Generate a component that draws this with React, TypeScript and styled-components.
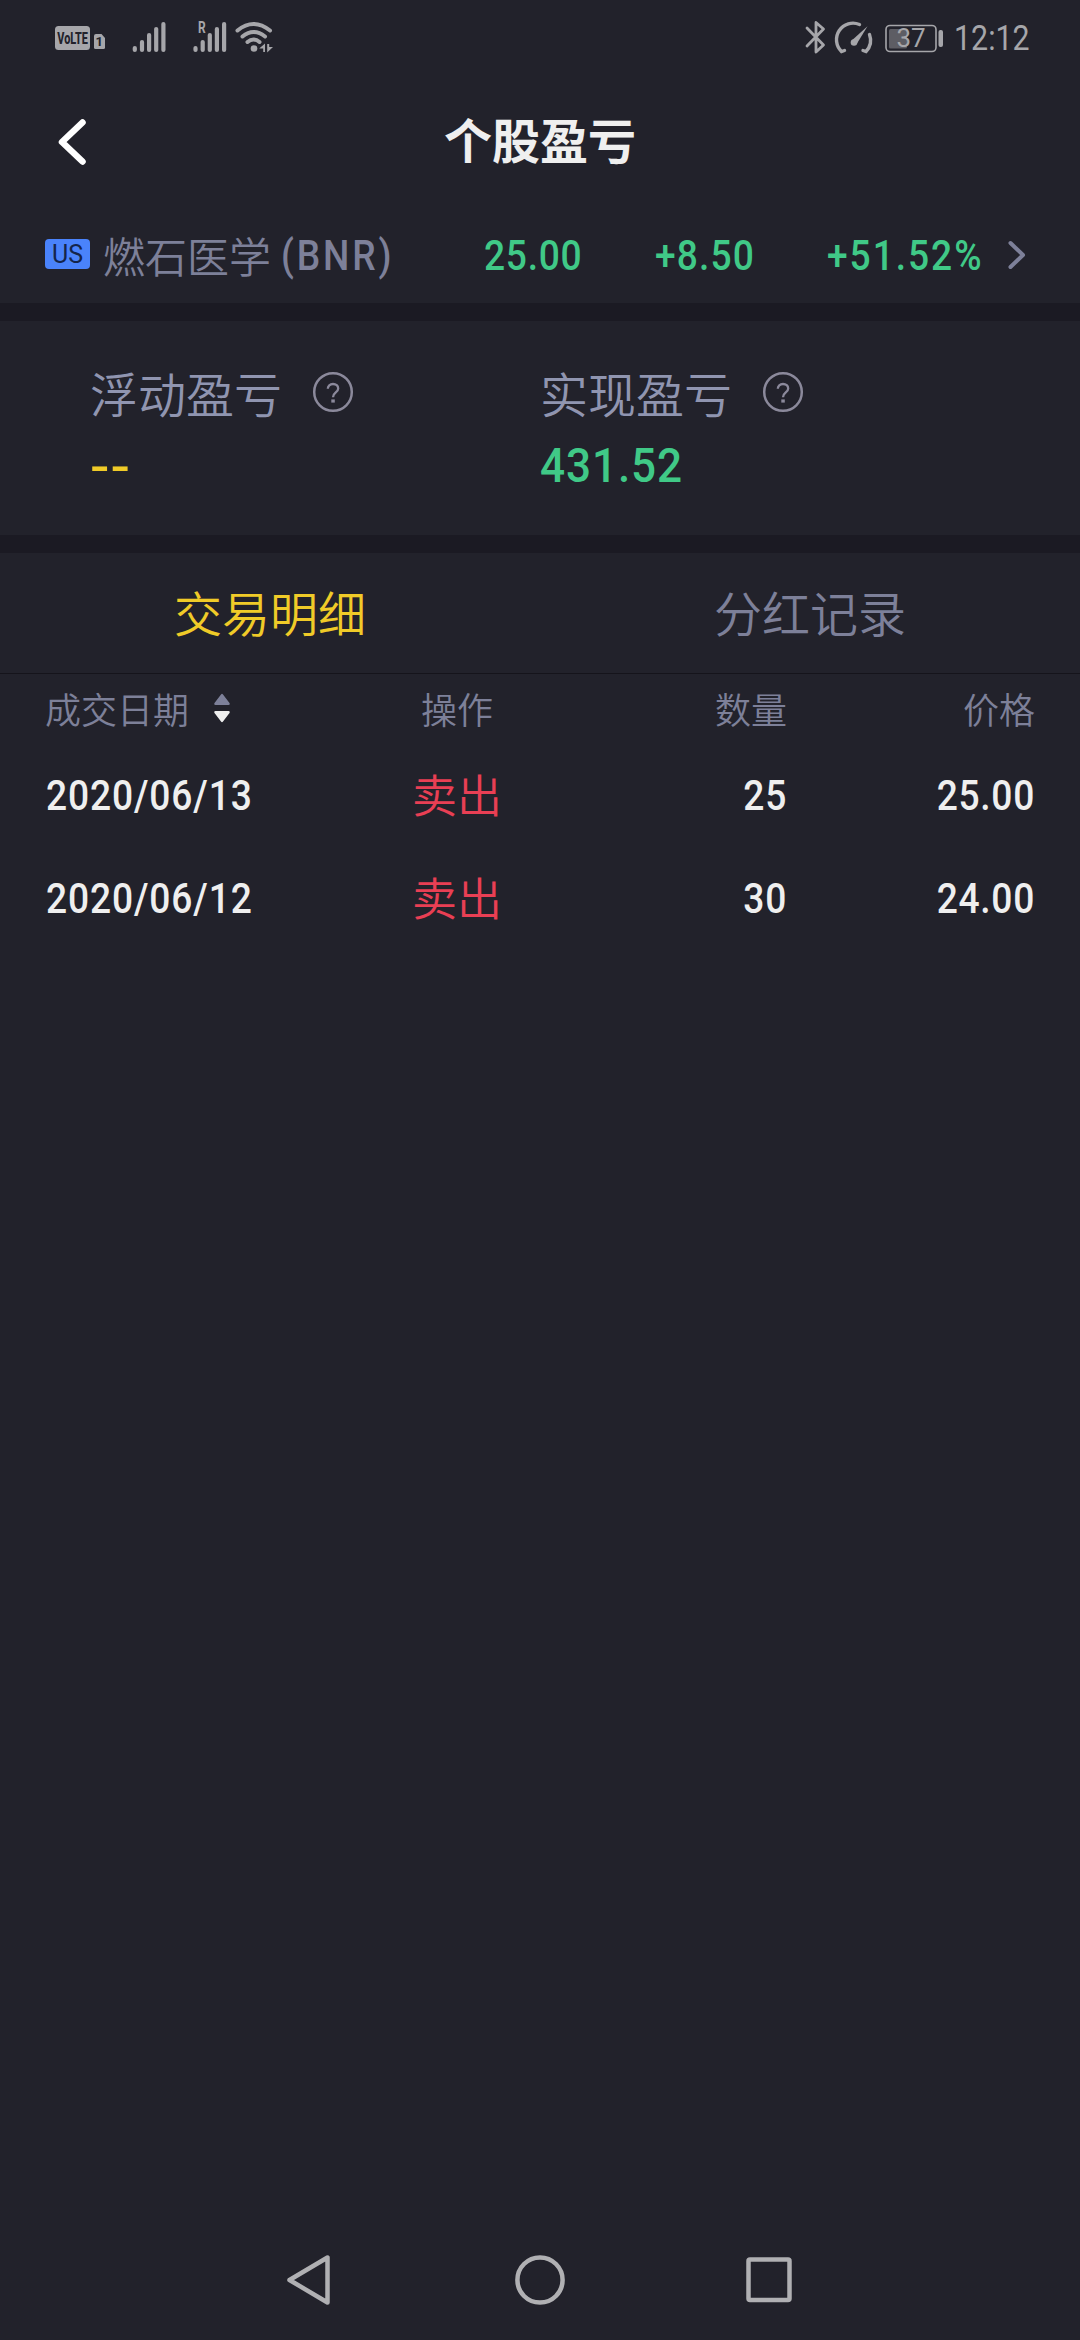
import React from "react";
import styled, { createGlobalStyle } from "styled-components";

const GlobalStyle = createGlobalStyle`
  * { box-sizing: border-box; }
  body { margin: 0; background: #22222b; }
`;

const color = {
  bg: "#22222b",
  band: "#1b1a23",
  muted: "#7d8099",
  label: "#9095b0",
  light: "#efefef",
  green: "#40c987",
  yellow: "#f0cb28",
  red: "#e93f54",
  status: "#a6a6aa",
};

const cjk = `"Noto Sans CJK SC", sans-serif`;

const Screen = styled.div`
  width: 1080px;
  height: 2340px;
  display: flex;
  flex-direction: column;
  background: ${color.bg};
  color: ${color.light};
  font-family: Roboto, ${cjk};
  overflow: hidden;
`;

const Band = styled.div`
  height: 18px;
  background: ${color.band};
`;

const StatusBar = styled.header`
  height: 76px;
  padding: 16px 51px 0 54px;
  display: flex;
  justify-content: space-between;
  align-items: flex-start;
  color: ${color.status};
`;

const StatusSide = styled.div`
  display: flex;
  height: 44px;
`;

const Clock = styled.time`
  width: 75px;
  margin-left: 10px;
  font-size: 34.5px;
  line-height: 44px;
  white-space: nowrap;
  transform: scaleX(0.88);
  transform-origin: left center;
`;

const TitleBar = styled.div`
  height: 131px;
  padding: 0 54px;
  display: grid;
  grid-template-columns: 40px 1fr 40px;
  align-items: center;
`;

const Title = styled.h1`
  margin: 0;
  padding-top: 3px;
  font-size: 48px;
  line-height: 56px;
  font-weight: 700;
  text-align: center;
`;

const Figure = styled.span<{
  $size?: number;
  $color?: string;
  $end?: boolean;
  $stretch?: number;
  $spacing?: number;
  $drop?: number;
}>`
  display: block;
  padding-top: ${(p) => p.$drop ?? 2}px;
  font-size: ${(p) => p.$size ?? 42}px;
  line-height: 1.2;
  font-weight: 500;
  letter-spacing: ${(p) => p.$spacing ?? 0.8}px;
  color: ${(p) => p.$color ?? color.light};
  text-align: ${(p) => (p.$end ? "right" : "left")};
  white-space: nowrap;
  transform: scaleX(${(p) => p.$stretch ?? 0.885});
  transform-origin: ${(p) => (p.$end ? "right" : "left")} center;
`;

const TradeDate = styled(Figure)`
  padding-left: 1px;
`;

const Quote = styled.section`
  height: 96px;
  padding: 0 45px;
  display: grid;
  grid-template-columns: 439px 171px 172px 180px 1fr;
  align-items: center;
`;

const Stock = styled.div`
  display: flex;
  align-items: center;
  color: ${color.muted};
`;

const Market = styled.span`
  width: 45px;
  height: 30px;
  margin: -2px 13px 0 0;
  border-radius: 4px;
  background: #4a83fb;
  color: #14254b;
  font-size: 25px;
  line-height: 31px;
  text-align: center;
`;

const StockName = styled.span`
  width: 178px;
  font-family: ${cjk};
  font-size: 42px;
  line-height: 52px;
  font-weight: 350;
  white-space: nowrap;
`;

const Summary = styled.section`
  height: 214px;
  padding: 45px 90px 0;
  display: grid;
  grid-template-columns: 450px 450px;
`;

const SummaryLabel = styled.div`
  height: 56px;
  padding-bottom: 4px;
  margin-bottom: 13px;
  display: flex;
  align-items: center;
  gap: 30px;
  font-family: ${cjk};
  font-size: 48px;
  line-height: 56px;
  font-weight: 350;
  color: ${color.label};
`;

const Tabs = styled.nav`
  height: 121px;
  display: grid;
  grid-template-columns: 1fr 1fr;
  border-bottom: 1px solid #15141b;
`;

const Tab = styled.div<{ $active?: boolean }>`
  font-family: ${cjk};
  font-size: 48px;
  line-height: 117px;
  font-weight: 350;
  text-align: center;
  color: ${(p) => (p.$active ? color.yellow : color.muted)};
`;

const Row = styled.div<{ $head?: boolean }>`
  height: ${(p) => (p.$head ? 70 : 103)}px;
  padding: 0 45px;
  display: grid;
  grid-template-columns: 322px 180px 240px 248px;
  align-items: center;
`;

const HeadCell = styled.div<{ $align?: string }>`
  padding-bottom: 3px;
  display: flex;
  align-items: center;
  justify-content: ${(p) => p.$align ?? "flex-start"};
  gap: 25px;
  font-family: ${cjk};
  font-size: 36px;
  line-height: 44px;
  font-weight: 350;
  color: ${color.muted};
`;

const Action = styled.div`
  padding-bottom: 4px;
  font-family: ${cjk};
  font-size: 45px;
  line-height: 54px;
  font-weight: 350;
  text-align: center;
  color: ${color.red};
`;

const NavBar = styled.footer`
  margin-top: auto;
  height: 120px;
  padding: 0 286px 0 284px;
  display: flex;
  justify-content: space-between;
  align-items: center;
`;

const bars: [number, number][] = [[0, 46], [7.2, 40], [14.3, 33], [21.4, 27], [28.6, 22]];

const Signal = ({ x }: { x: number }) => (
  <g stroke="currentColor" strokeWidth="4.2" strokeLinecap="round">
    {bars.map(([dx, top]) => (
      <line key={dx} x1={x + dx} x2={x + dx} y1={top + 2} y2="50" />
    ))}
  </g>
);

const StatusLeft = () => (
  <svg width="222" height="44" viewBox="54 16 222 44" fill="none">
    <rect x="55" y="26" width="35" height="24" rx="3.5" fill="currentColor" />
    <text transform="translate(57.3 43.5) scale(.68 1)" fontSize="16" fontWeight="800" fill={color.bg}>VoLTE</text>
    <path d="M94 36q0-2 2-2h5.500l3.500 4v9.500q0 1.500-1.500 1.500h-8q-1.500 0-1.500-1.500z" fill="currentColor" />
    <text x="99.3" y="46" textAnchor="middle" fontSize="13" fontWeight="700" fill={color.bg}>1</text>
    <Signal x={134.8} />
    <text transform="translate(198 33) scale(.75 1)" fontSize="16" fontWeight="700" fill="currentColor">R</text>
    <Signal x={195.5} />
    <g stroke="currentColor" strokeWidth="4" strokeLinecap="round">
      <path d="M237.500 30.500Q253.500 17.500 270 30.500" />
      <path d="M242.500 36.500Q253.500 27.500 265 36.500" />
      <path d="M247.500 42Q253.500 37 259.500 42" />
    </g>
    <circle cx="254" cy="48.5" r="3.3" fill="currentColor" />
    <path d="M265 43.500v8.500h-1.800v-3.500h-4z M267.200 44v8.500l5.800-5.500h-3.800v-3z" fill="currentColor" />
  </svg>
);

const StatusRight = () => (
  <svg width="140" height="44" viewBox="804 16 140 44" fill="none">
    <path d="M807 28l16.500 17-7.500 7V22.500l7.500 6.500L807 46" stroke="currentColor" strokeWidth="2.8" strokeLinejoin="round" strokeLinecap="round" />
    <g stroke="currentColor" strokeWidth="3.4" strokeLinecap="round">
      <path d="M859.500 24.500A16.500 16.500 0 0 0 841.500 51.500L844.500 50.500" />
      <path d="M869.500 34.500A16.500 16.500 0 0 1 866 51.500L863 50.500" />
    </g>
    <path d="M867.500 26.200l-10.500 17.300-5-3.200z" fill="currentColor" />
    <circle cx="854" cy="42.5" r="3.3" fill="currentColor" />
    <rect x="886" y="25.500" width="50" height="26" rx="4" stroke="currentColor" strokeWidth="1.6" />
    <rect x="889" y="29" width="18" height="19.5" rx="1.5" fill="#5d5d64" />
    <text x="911" y="47" textAnchor="middle" fontSize="26" fill="currentColor">37</text>
    <rect x="938.5" y="30" width="4.5" height="17" rx="2" fill="currentColor" />
  </svg>
);

const BackIcon = () => (
  <svg width="36" height="50" viewBox="54 116 36 50" fill="none">
    <path d="M82.500 121.500L62 141l20.500 19.500" stroke="#fff" strokeWidth="6.5" strokeLinecap="round" strokeLinejoin="round" />
  </svg>
);

const MoreIcon = () => (
  <svg width="20" height="32" viewBox="1007 239 20 32" fill="none">
    <path d="M1010.500 243l12.500 12-12.500 12" stroke={color.muted} strokeWidth="4" strokeLinecap="round" strokeLinejoin="round" />
  </svg>
);

const HelpIcon = () => (
  <svg width="42" height="42" viewBox="0 0 42 42" fill="none" stroke="#8b899b">
    <circle cx="21" cy="21" r="18.8" strokeWidth="2.5" />
    <path d="M15.800 17.800c0-3 2.200-4.800 5.200-4.800s5.200 1.800 5.200 4.500c0 4-5.200 4-5.200 8.700" strokeWidth="2.3" />
    <path d="M19.300 30h3.500" strokeWidth="3.2" />
  </svg>
);

const SortIcon = () => (
  <svg width="16" height="30" viewBox="0 0 16 30">
    <path d="M7 1.500q1-1.500 2 0L15.500 10q.8 2-1 2h-13q-1.800 0-1-2z" fill={color.muted} />
    <path d="M7 28.500q1 1.500 2 0L15.500 20q.8-2-1-2h-13q-1.800 0-1 2z" fill={color.light} />
  </svg>
);

const trades = [
  { date: "2020/06/13", action: "卖出", qty: "25", price: "25.00" },
  { date: "2020/06/12", action: "卖出", qty: "30", price: "24.00" },
];

export default function App() {
  return (
    <Screen>
      <GlobalStyle />
      <StatusBar>
        <StatusSide><StatusLeft /></StatusSide>
        <StatusSide>
          <StatusRight />
          <Clock>12:12</Clock>
        </StatusSide>
      </StatusBar>
      <TitleBar>
        <BackIcon />
        <Title>个股盈亏</Title>
      </TitleBar>
      <Quote>
        <Stock>
          <Market>US</Market>
          <StockName>燃石医学</StockName>
          <Figure $color={color.muted} $spacing={3.2}>(BNR)</Figure>
        </Stock>
        <Figure $color={color.green}>25.00</Figure>
        <Figure $color={color.green} $spacing={1.3}>+8.50</Figure>
        <Figure $color={color.green} $spacing={2.2}>+51.52%</Figure>
        <MoreIcon />
      </Quote>
      <Band />
      <Summary>
        <div>
          <SummaryLabel>浮动盈亏<HelpIcon /></SummaryLabel>
          <Figure $size={49} $color={color.yellow} $stretch={1.17} $drop={3}>--</Figure>
        </div>
        <div>
          <SummaryLabel>实现盈亏<HelpIcon /></SummaryLabel>
          <Figure $size={49} $color={color.green} $stretch={0.9} $spacing={1}>431.52</Figure>
        </div>
      </Summary>
      <Band />
      <Tabs>
        <Tab $active>交易明细</Tab>
        <Tab>分红记录</Tab>
      </Tabs>
      <Row $head>
        <HeadCell>成交日期<SortIcon /></HeadCell>
        <HeadCell $align="center">操作</HeadCell>
        <HeadCell $align="flex-end">数量</HeadCell>
        <HeadCell $align="flex-end">价格</HeadCell>
      </Row>
      {trades.map((t) => (
        <Row key={t.date}>
          <TradeDate $spacing={1}>{t.date}</TradeDate>
          <Action>{t.action}</Action>
          <Figure $end>{t.qty}</Figure>
          <Figure $end>{t.price}</Figure>
        </Row>
      ))}
      <NavBar>
        <svg width="52" height="54" viewBox="284 2253 52 54" fill="none">
          <path d="M327.500 2257.500v45L289.500 2280z" stroke="#b0b0b3" strokeWidth="4.5" strokeLinejoin="round" />
        </svg>
        <svg width="54" height="54" viewBox="513 2253 54 54" fill="none">
          <circle cx="540" cy="2280" r="22.6" stroke="#b0b0b3" strokeWidth="4.5" />
        </svg>
        <svg width="50" height="54" viewBox="744 2253 50 54" fill="none">
          <rect x="748.5" y="2259.5" width="41" height="40.5" rx="1.5" stroke="#b0b0b3" strokeWidth="4.5" />
        </svg>
      </NavBar>
    </Screen>
  );
}
